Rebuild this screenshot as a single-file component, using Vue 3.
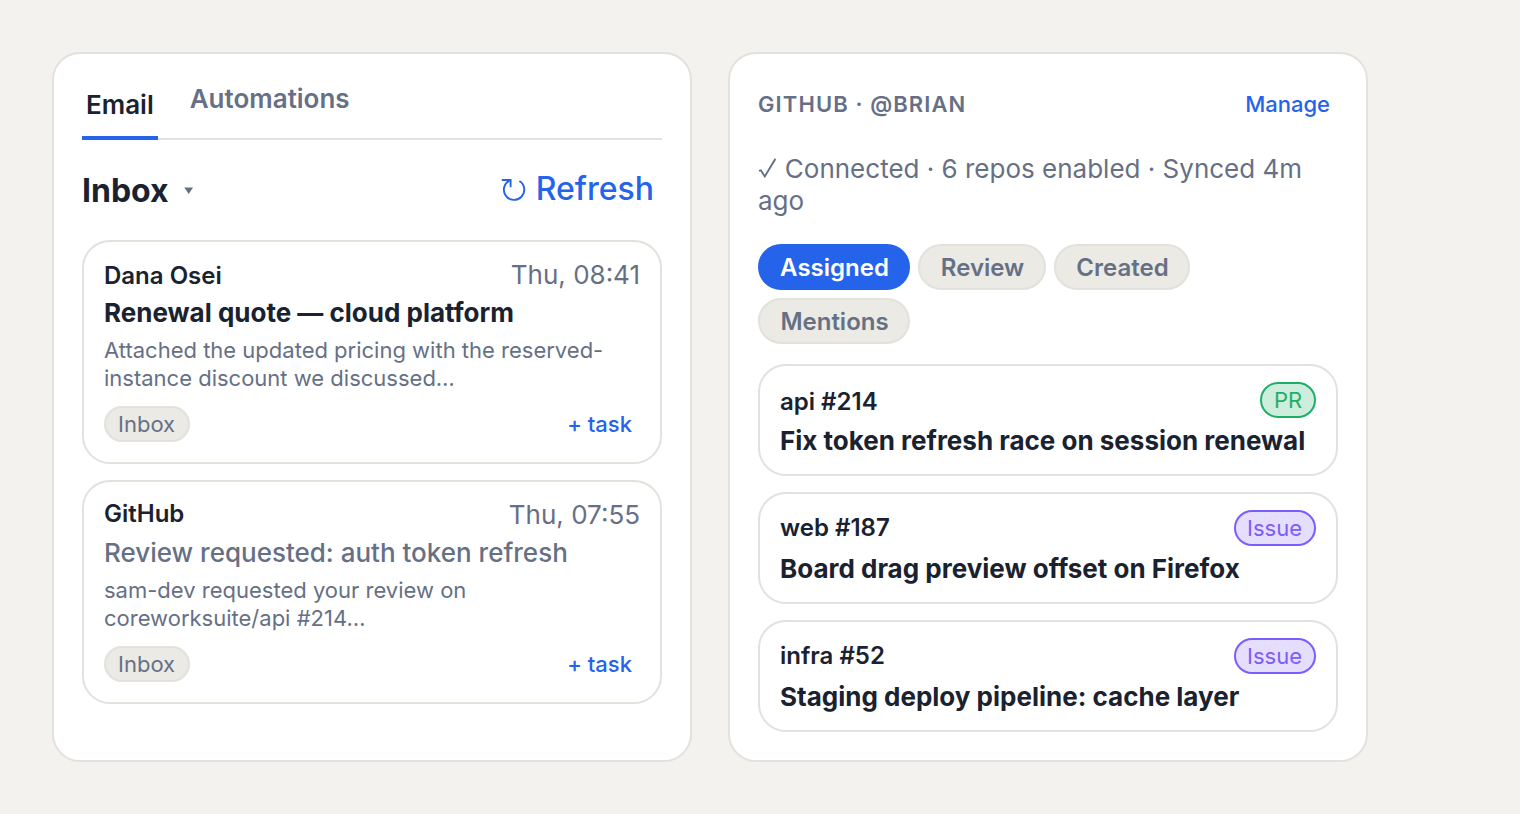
<script setup>
const mails = [
  {
    from: 'Dana Osei', time: 'Thu, 08:41', subject: 'Renewal quote — cloud platform',
    lines: ['Attached the updated pricing with the reserved-', 'instance discount we discussed…'],
    unread: true,
  },
  {
    from: 'GitHub', time: 'Thu, 07:55', subject: 'Review requested: auth token refresh',
    lines: ['sam-dev requested your review on', 'coreworksuite/api #214…'],
    unread: false,
  },
]
const filters = ['Assigned', 'Review', 'Created', 'Mentions']
const items = [
  { ref: 'api #214', kind: 'PR', title: 'Fix token refresh race on session renewal' },
  { ref: 'web #187', kind: 'Issue', title: 'Board drag preview offset on Firefox' },
  { ref: 'infra #52', kind: 'Issue', title: 'Staging deploy pipeline: cache layer' },
]
</script>

<template>
  <main class="page">
    <section class="panel">
      <nav class="tabs">
        <a class="tab active">Email</a>
        <a class="tab">Automations</a>
      </nav>
      <header class="inbox-head">
        <h2>Inbox
          <svg class="caret" width="10" height="8" viewBox="0 0 10 8"><path d="M.3.5h8.8L4.7 7z" fill="currentColor" /></svg>
        </h2>
        <button class="refresh">
          <svg class="reload" width="26" height="24" viewBox="0 0 26 24" fill="none" stroke="currentColor" stroke-width="1.9"><path d="M.8 2H9.6V9.2" /><path d="M9.4 2.2A10.2 10.2 0 1 0 18.4 3" /></svg>
          <span>Refresh</span>
        </button>
      </header>
      <div class="list">
        <article v-for="m in mails" :key="m.from" class="card mail" :class="{ read: !m.unread }">
          <div class="row top"><span class="from">{{ m.from }}</span><time>{{ m.time }}</time></div>
          <h3>{{ m.subject }}</h3>
          <p><span v-for="l in m.lines" :key="l">{{ l }}</span></p>
          <div class="row foot"><span class="chip inbox">Inbox</span><a class="task">+ task</a></div>
        </article>
      </div>
    </section>

    <section class="panel">
      <header class="row gh-head"><span class="label">GITHUB · @BRIAN</span><a class="manage">Manage</a></header>
      <p class="status"><svg class="check" width="18" height="20" viewBox="0 0 18 20" fill="none" stroke="currentColor" stroke-width="1.9"><path d="M1 12.9L2.9 12.3 6.8 18.4 17.4.8" /></svg> Connected · 6 repos enabled · Synced 4m ago</p>
      <div class="filters">
        <button v-for="(f, i) in filters" :key="f" class="filter" :class="[f.toLowerCase(), { on: i === 0 }]">{{ f }}</button>
      </div>
      <div class="list">
        <article v-for="it in items" :key="it.ref" class="card ticket">
          <div class="row"><span class="ref" :class="{ low: it.kind === 'PR' }">{{ it.ref }}</span><span class="chip" :class="it.kind.toLowerCase()">{{ it.kind }}</span></div>
          <h3>{{ it.title }}</h3>
        </article>
      </div>
    </section>
  </main>
</template>

<style>
body { background: #f3f2ee; }
</style>

<style scoped>
* { box-sizing: border-box; margin: 0; }
.page {
  display: flex;
  gap: 36px;
  height: 814px;
  padding: 52px;
  background: #f3f2ee;
  font-family: Inter, "Liberation Sans", sans-serif;
  font-optical-sizing: none;
  font-size: 26px;
  color: #1a2230;
}
.panel {
  width: 640px;
  height: 710px;
  padding: 28px;
  background: #fff;
  border: 2px solid #e2e1dc;
  border-radius: 28px;
}
button { font: inherit; border: 0; background: none; padding: 0; }
.row { display: flex; justify-content: space-between; }
.tabs {
  display: flex;
  gap: 28px;
  height: 58px;
  border-bottom: 2px solid #e2e1dc;
}
.tab { height: 58px; padding: 0 4px; font-weight: 600; line-height: 34px; color: #667085; }
.tab.active { color: #1a2230; line-height: 46px; border-bottom: 4px solid #2563eb; }
.inbox-head {
  display: flex;
  justify-content: space-between;
  height: 100px;
  padding: 30px 8px 0 0;
}
h2 { display: flex; align-items: center; gap: 15px; height: 41px; font-size: 32px; font-weight: 700; line-height: 41px; }
.caret { color: #667085; }
.refresh { display: flex; gap: 9px; height: 38px; font-size: 32px; font-weight: 500; line-height: 38px; color: #2563eb; }
.reload { margin-top: 8px; }
.list { display: flex; flex-direction: column; gap: 16px; }
.card { padding: 16px 20px; border: 2px solid #e2e1dc; border-radius: 28px; }
.mail { height: 224px; }
.top { height: 36px; line-height: 35px; }
.from { font-size: 24px; font-weight: 600; }
.read .from { margin-top: -2px; }
time { line-height: 34px; color: #667085; }
h3 { font-size: 26px; font-weight: 700; height: 38px; line-height: 38px; white-space: nowrap; }
.read h3 { font-weight: 500; color: #667085; }
.mail p { margin-top: 4px; font-size: 22px; line-height: 28px; color: #667085; }
.mail p span { display: block; }
.foot { align-items: center; margin-top: 14px; padding-right: 8px; }
.chip {
  height: 36px;
  padding: 0 12px;
  font-size: 22px;
  line-height: 32px;
  color: #667085;
  background: #ebeae4;
  border: 2px solid #e2e1dc;
  border-radius: 18px;
}
.chip.inbox { width: 86px; }
.task, .manage { font-size: 22px; font-weight: 500; color: #2563eb; }
.gh-head { height: 71px; padding-right: 8px; line-height: 44px; }
.label { font-size: 22px; font-weight: 600; letter-spacing: 1.1px; color: #667085; }
.status { line-height: 32px; color: #667085; }
.check { margin-right: 1.5px; vertical-align: 0; }
.filters { display: flex; flex-wrap: wrap; gap: 8px; margin: 27px 0 20px; }
.filter {
  height: 46px;
  padding: 0 0 0 1px;
  font-size: 24px;
  font-weight: 600;
  color: #667085;
  background: #ebeae4;
  border: 2px solid #e2e1dc;
  border-radius: 23px;
}
.assigned, .mentions { width: 152px; }
.review { width: 128px; }
.created { width: 136px; }
.filter.on { color: #fff; background: #2563eb; border-color: #2563eb; }
.ticket { height: 112px; }
.ticket .row { height: 36px; }
.ref { font-size: 24px; font-weight: 600; line-height: 35px; }
.ref.low { line-height: 39px; }
.ticket h3 { line-height: 45px; }
.pr { width: 56px; color: #1fae68; background: #cdeedd; border-color: #1fae68; }
.issue { width: 82px; padding: 0 11px; color: #7c5cfc; background: #e5deff; border-color: #7c5cfc; }
</style>
